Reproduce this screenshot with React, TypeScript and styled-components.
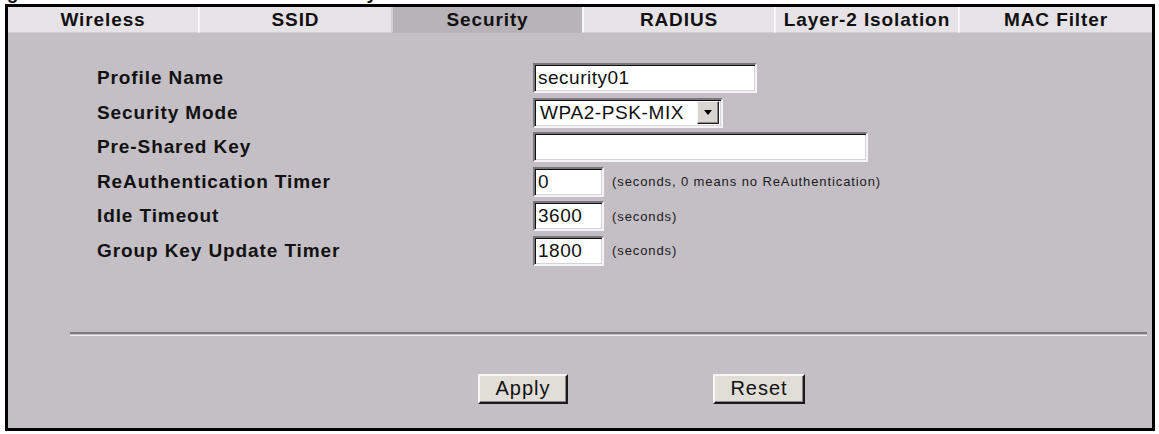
import React from 'react';
import styled, { createGlobalStyle } from 'styled-components';

const GlobalStyle = createGlobalStyle`
  body {
    margin: 0;
    background: #ffffff;
    font-family: "Liberation Sans", Arial, sans-serif;
    color: #111111;
  }
`;

const Page = styled.div`
  width: 1159px;
  padding: 0 4px 0 5px;
  box-sizing: border-box;
`;

const Caption = styled.div`
  height: 4px;
  overflow: hidden;
  font-size: 19px;
  font-weight: bold;
  letter-spacing: 0.9px;
  line-height: 22px;
  white-space: nowrap;
`;

const CaptionText = styled.span`
  display: block;
  margin: -18px 0 0 -17px;
`;

const Frame = styled.div`
  border: 3px solid #000000;
  background: #c3bfc4;
`;

const TabBar = styled.div`
  display: grid;
  grid-template-columns: 190px 193px 191px 192px 184px 1fr;
  height: 26px;
  background: #e6e3e7;
`;

const Tab = styled.div<{ $active?: boolean }>`
  display: flex;
  align-items: center;
  justify-content: center;
  font-size: 19px;
  font-weight: bold;
  letter-spacing: 0.9px;
  background: ${(p) => (p.$active ? '#b7b3b9' : '#e6e3e7')};
  border-left: 2px solid ${(p) => (p.$active ? '#cfccd0' : '#f7f6f8')};
  border-bottom: 1px solid ${(p) => (p.$active ? '#b7b3b9' : '#d2cfd3')};
  box-sizing: border-box;
  &:first-child {
    border-left: none;
  }
`;

const Panel = styled.div`
  height: 395px;
  display: flex;
  flex-direction: column;
  box-sizing: border-box;
  padding-top: 30px;
`;

const FormGrid = styled.div`
  display: grid;
  grid-template-columns: 436px 1fr;
  grid-auto-rows: 30px;
  row-gap: 4.6px;
  padding-left: 89px;
`;

const Label = styled.div`
  display: flex;
  align-items: center;
  font-size: 19px;
  font-weight: bold;
  letter-spacing: 0.9px;
`;

const Field = styled.div`
  display: flex;
  align-items: center;
  gap: 8px;
`;

const TextBox = styled.input<{ $width: number }>`
  width: ${(p) => p.$width}px;
  height: 30px;
  box-sizing: border-box;
  margin: 0;
  padding: 0 3px;
  font-family: "Liberation Sans", Arial, sans-serif;
  font-size: 19px;
  letter-spacing: 0.5px;
  color: #111111;
  background: #ffffff;
  border: 2px solid;
  border-color: #7a777c #f4f3f5 #f4f3f5 #7a777c;
  box-shadow: inset 1px 1px 0 #101010, inset -1px -1px 0 #d6d3d8;
  outline: none;
`;

const SelectBox = styled.div`
  display: flex;
  align-items: center;
  width: 190px;
  height: 30px;
  box-sizing: border-box;
  padding: 0 2px 0 5px;
  background: #ffffff;
  border: 2px solid;
  border-color: #7a777c #f4f3f5 #f4f3f5 #7a777c;
  box-shadow: inset 1px 1px 0 #101010, inset -1px -1px 0 #d6d3d8;
`;

const SelectText = styled.span`
  flex: 1;
  font-size: 19px;
  letter-spacing: 0.6px;
`;

const ArrowButton = styled.div`
  display: flex;
  align-items: center;
  justify-content: center;
  width: 22px;
  height: 23px;
  box-sizing: border-box;
  background: #d8d5d0;
  border: 1px solid;
  border-color: #f4f3f5 #202020 #202020 #f4f3f5;
  box-shadow: inset -1px -1px 0 #8a878c;
`;

const Hint = styled.span`
  font-size: 13px;
  letter-spacing: 0.9px;
  color: #1a1a1a;
`;

const Divider = styled.div`
  margin: 66px 5px 0 62px;
  height: 1px;
  border-top: 2px solid #7d7a7f;
  border-bottom: 1px solid #eeecef;
`;

const ButtonRow = styled.div`
  display: flex;
  gap: 145px;
  margin-top: 38px;
  padding-left: 470px;
`;

const Button = styled.button<{ $width: number }>`
  width: ${(p) => p.$width}px;
  height: 30px;
  margin: 0;
  padding: 0;
  font-family: "Liberation Sans", Arial, sans-serif;
  font-size: 20px;
  letter-spacing: 1px;
  color: #111111;
  background: #e1ded8;
  border: 2px solid;
  border-color: #f8f7f5 #1a1a1a #1a1a1a #f8f7f5;
  box-shadow: inset -1px -1px 0 #8a878c;
`;

const tabs = ['Wireless', 'SSID', 'Security', 'RADIUS', 'Layer-2 Isolation', 'MAC Filter'];

function DownArrow() {
  return (
    <svg width="10" height="6" viewBox="0 0 10 6">
      <path d="M1 0 L9 0 L5 5 Z" fill="#000000" />
    </svg>
  );
}

export default function App() {
  return (
    <Page>
      <GlobalStyle />
      <Caption>
        <CaptionText>Figure 118 Wireless LAN Mode Security</CaptionText>
      </Caption>
      <Frame>
        <TabBar>
          {tabs.map((t) => (
            <Tab key={t} $active={t === 'Security'}>
              {t}
            </Tab>
          ))}
        </TabBar>
        <Panel>
          <FormGrid>
            <Label>Profile Name</Label>
            <Field>
              <TextBox $width={224} defaultValue="security01" />
            </Field>
            <Label>Security Mode</Label>
            <Field>
              <SelectBox>
                <SelectText>WPA2-PSK-MIX</SelectText>
                <ArrowButton>
                  <DownArrow />
                </ArrowButton>
              </SelectBox>
            </Field>
            <Label>Pre-Shared Key</Label>
            <Field>
              <TextBox $width={335} defaultValue="" />
            </Field>
            <Label>ReAuthentication Timer</Label>
            <Field>
              <TextBox $width={71} defaultValue="0" />
              <Hint>(seconds, 0 means no ReAuthentication)</Hint>
            </Field>
            <Label>Idle Timeout</Label>
            <Field>
              <TextBox $width={71} defaultValue="3600" />
              <Hint>(seconds)</Hint>
            </Field>
            <Label>Group Key Update Timer</Label>
            <Field>
              <TextBox $width={71} defaultValue="1800" />
              <Hint>(seconds)</Hint>
            </Field>
          </FormGrid>
          <Divider />
          <ButtonRow>
            <Button $width={90}>Apply</Button>
            <Button $width={92}>Reset</Button>
          </ButtonRow>
        </Panel>
      </Frame>
    </Page>
  );
}
